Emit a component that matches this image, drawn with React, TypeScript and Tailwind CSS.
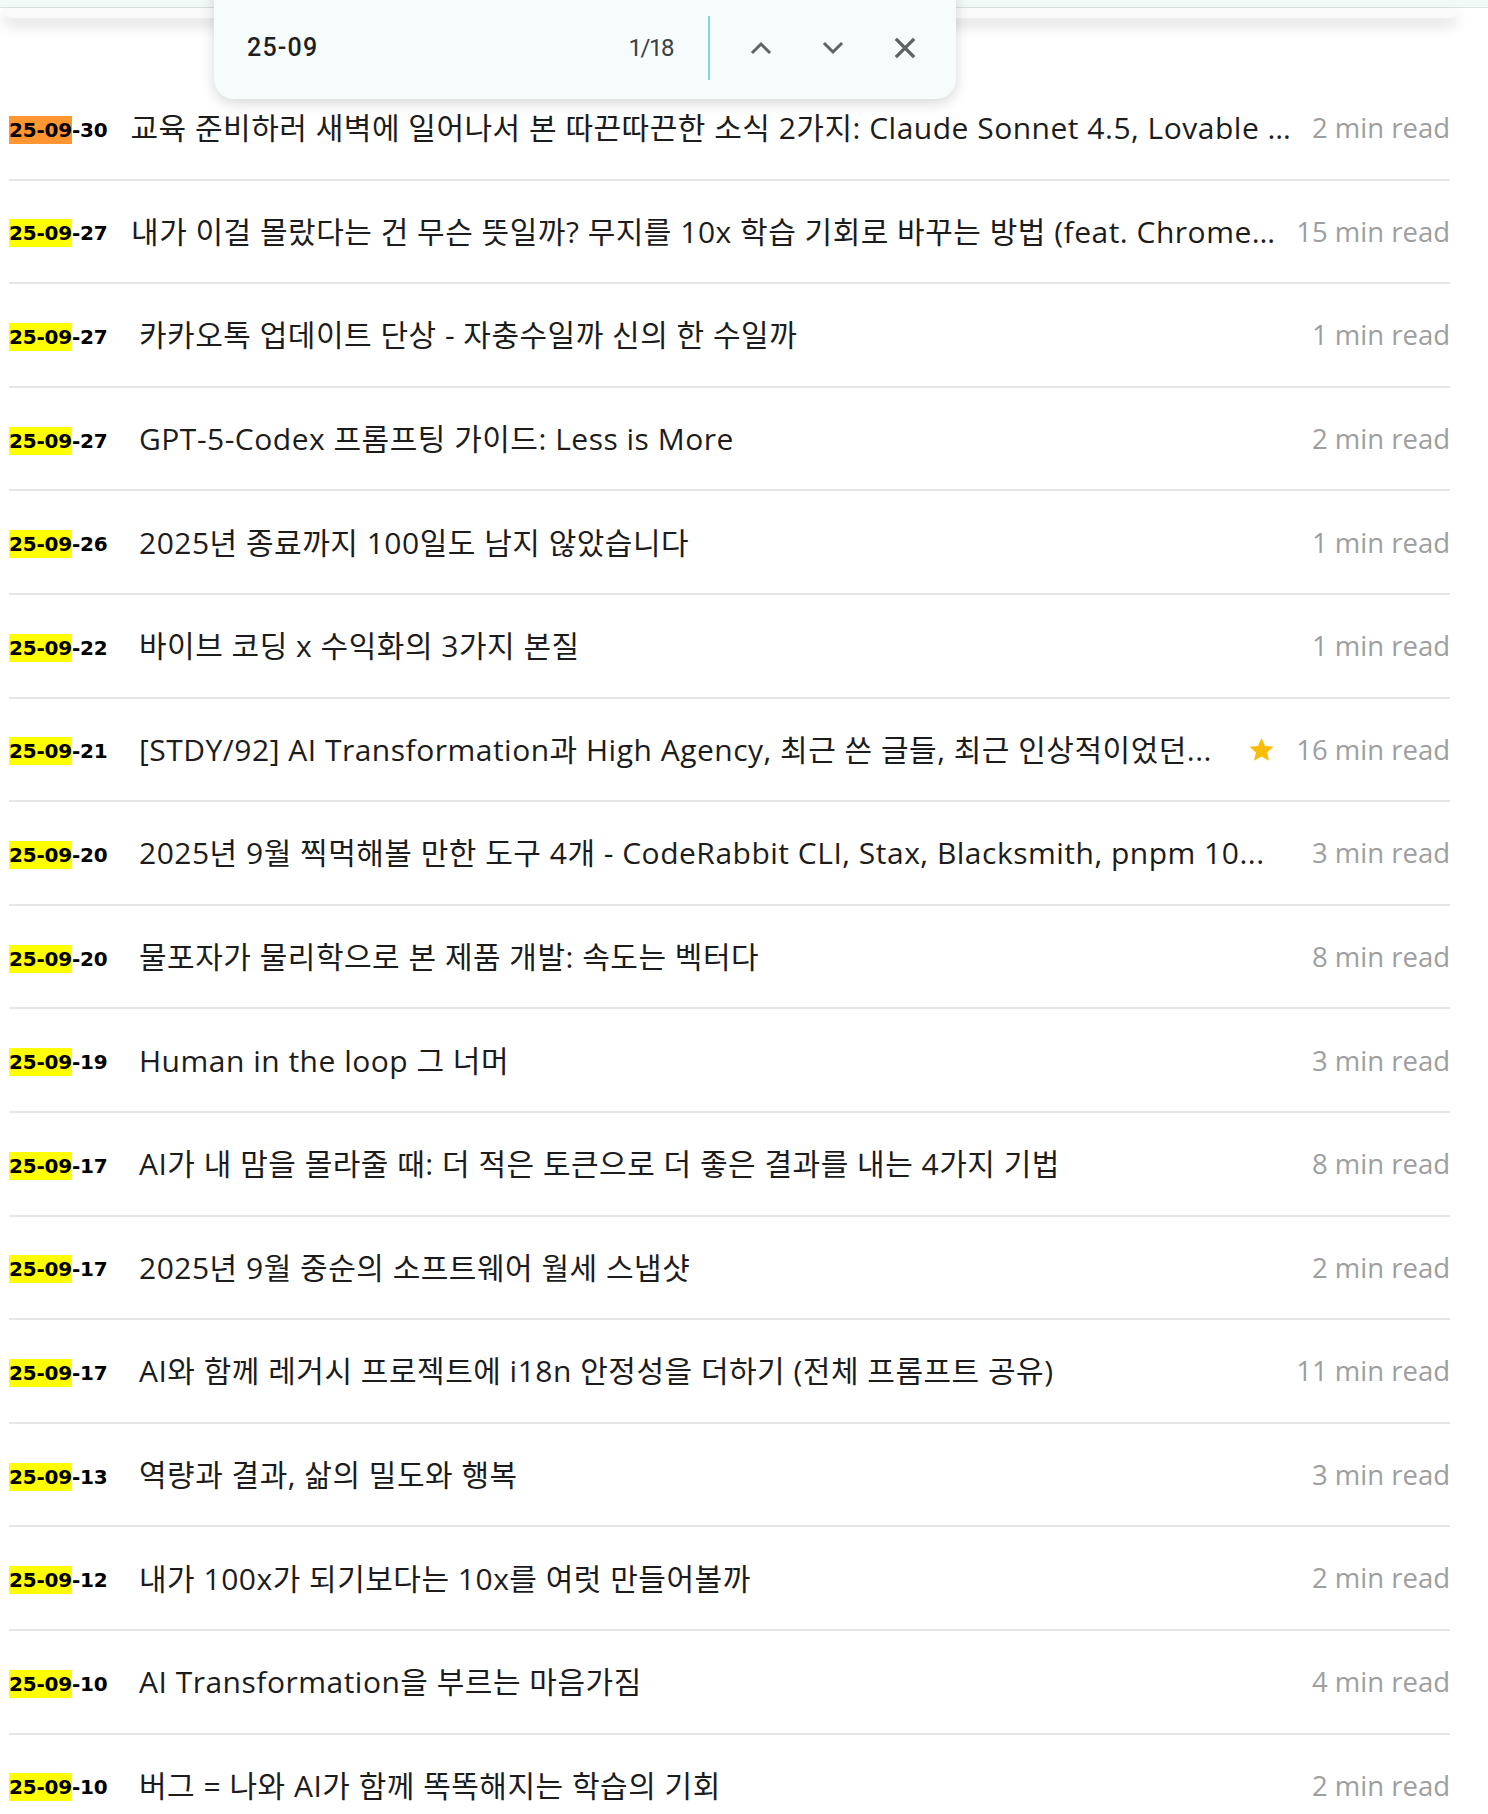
import { useState } from "react";

interface Post {
  date: string;
  title: string;
  minutes: number;
  starred?: boolean;
}

const posts: Post[] = [
  { date: "25-09-30", title: "교육 준비하러 새벽에 일어나서 본 따끈따끈한 소식 2가지: Claude Sonnet 4.5, Lovable ...", minutes: 2 },
  { date: "25-09-27", title: "내가 이걸 몰랐다는 건 무슨 뜻일까? 무지를 10x 학습 기회로 바꾸는 방법 (feat. Chrome...", minutes: 15 },
  { date: "25-09-27", title: "카카오톡 업데이트 단상 - 자충수일까 신의 한 수일까", minutes: 1 },
  { date: "25-09-27", title: "GPT-5-Codex 프롬프팅 가이드: Less is More", minutes: 2 },
  { date: "25-09-26", title: "2025년 종료까지 100일도 남지 않았습니다", minutes: 1 },
  { date: "25-09-22", title: "바이브 코딩 x 수익화의 3가지 본질", minutes: 1 },
  { date: "25-09-21", title: "[STDY/92] AI Transformation과 High Agency, 최근 쓴 글들, 최근 인상적이었던...", minutes: 16, starred: true },
  { date: "25-09-20", title: "2025년 9월 찍먹해볼 만한 도구 4개 - CodeRabbit CLI, Stax, Blacksmith, pnpm 10...", minutes: 3 },
  { date: "25-09-20", title: "물포자가 물리학으로 본 제품 개발: 속도는 벡터다", minutes: 8 },
  { date: "25-09-19", title: "Human in the loop 그 너머", minutes: 3 },
  { date: "25-09-17", title: "AI가 내 맘을 몰라줄 때: 더 적은 토큰으로 더 좋은 결과를 내는 4가지 기법", minutes: 8 },
  { date: "25-09-17", title: "2025년 9월 중순의 소프트웨어 월세 스냅샷", minutes: 2 },
  { date: "25-09-17", title: "AI와 함께 레거시 프로젝트에 i18n 안정성을 더하기 (전체 프롬프트 공유)", minutes: 11 },
  { date: "25-09-13", title: "역량과 결과, 삶의 밀도와 행복", minutes: 3 },
  { date: "25-09-12", title: "내가 100x가 되기보다는 10x를 여럿 만들어볼까", minutes: 2 },
  { date: "25-09-10", title: "AI Transformation을 부르는 마음가짐", minutes: 4 },
  { date: "25-09-10", title: "버그 = 나와 AI가 함께 똑똑해지는 학습의 기회", minutes: 2 },
];

const QUERY = "25-09";

function DateLabel({ date, active }: { date: string; active: boolean }) {
  const rest = date.slice(QUERY.length);
  return (
    <span className="font-['DejaVu_Sans',sans-serif] font-bold text-[20px] text-black tracking-[-0.2px] whitespace-nowrap">
      <mark className={active ? "bg-[#ff9632] text-black py-[2px]" : "bg-[#ffff00] text-black py-[2px]"}>{QUERY}</mark>
      {rest}
    </span>
  );
}

function Star() {
  return (
    <svg width="29" height="29" viewBox="0 0 24 24" className="shrink-0">
      <path
        fill="#fbbc04"
        d="M12 2.5l2.9 6.6 7.1.6-5.4 4.7 1.6 7-6.2-3.7-6.2 3.7 1.6-7L2 9.7l7.1-.6z"
      />
    </svg>
  );
}

function FindBar({ index, total }: { index: number; total: number }) {
  return (
    <div className="absolute left-[214px] top-[-20px] w-[742px] h-[119px] pt-[16px] bg-[#f6fcfb] rounded-[20px] shadow-[0_4px_14px_rgba(0,0,0,0.16)] flex items-center font-['Roboto',sans-serif]">
      <span className="flex-1 pl-[33px] text-[25px] font-medium tracking-[1.2px] text-[#1f1f1f]">{QUERY}</span>
      <span className="text-[24px] text-[#3c4043] tracking-[-1.5px]">
        {index}/{total}
      </span>
      <div className="ml-[35px] w-[2px] h-[64px] bg-[#7fdcd4]" />
      <div className="ml-[15px] mr-[15px] flex">
        <button className="w-[72px] h-[64px] flex items-center justify-center">
          <svg width="22" height="14" viewBox="0 0 22 14" fill="none" stroke="#5f6368" strokeWidth="3" strokeLinecap="square">
            <path d="M3 11l8-8 8 8" />
          </svg>
        </button>
        <button className="w-[72px] h-[64px] flex items-center justify-center">
          <svg width="22" height="14" viewBox="0 0 22 14" fill="none" stroke="#5f6368" strokeWidth="3" strokeLinecap="square">
            <path d="M3 3l8 8 8-8" />
          </svg>
        </button>
        <button className="w-[72px] h-[64px] flex items-center justify-center">
          <svg width="22" height="22" viewBox="0 0 22 22" fill="none" stroke="#5f6368" strokeWidth="3.2" strokeLinecap="square">
            <path d="M3 3l16 16M19 3L3 19" />
          </svg>
        </button>
      </div>
    </div>
  );
}

export default function App() {
  const [active] = useState(0);

  return (
    <div className="relative min-h-[1814px] bg-white overflow-hidden">
      <div className="h-[8px] bg-[#f1faf7] border-b border-[#dbe3e1]" />
      <div className="ml-[2px] w-[1456px] h-[10px] bg-[#fafafa] rounded-b-[14px] shadow-[0_8px_14px_rgba(0,0,0,0.14)]" />

      <ul className="ml-[9px] w-[1441px] pt-[59px]">
        {posts.map((post, i) => (
          <li
            key={i}
            className="flex items-center h-[103.6px] border-b-2 border-[#e6e6e6]"
          >
            {/* date column gives up its spare room before the title gets cut */}
            <div className="w-[130px] min-w-[106px] shrink-[100] pt-[4px]">
              <DateLabel date={post.date} active={i === active} />
            </div>
            <span className="grow min-w-0 truncate text-[30px] tracking-[0.5px] text-[#1c1c1c] font-['Open_Sans','Noto_Sans_CJK_KR',sans-serif]">
              {post.title}
            </span>
            {post.starred && (
              <span className="ml-[22px] flex shrink-0">
                <Star />
              </span>
            )}
            <span className="ml-[20px] shrink-0 text-[27.5px] text-[#9e9e9e] font-['Open_Sans',sans-serif]">
              {post.minutes} min read
            </span>
          </li>
        ))}
      </ul>

      <FindBar index={1} total={18} />
    </div>
  );
}
